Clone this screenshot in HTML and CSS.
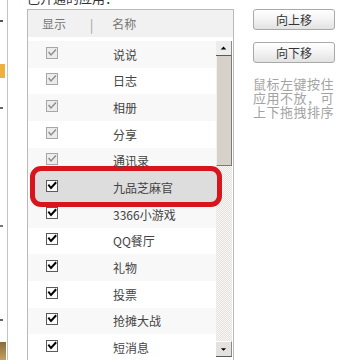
FILE: index.html
```html
<!DOCTYPE html>
<html>
<head>
<meta charset="utf-8">
<link rel="stylesheet" href="styles.css">
</head>
<body>
<div class="strip">
  <span class="mk mk1"></span>
  <span class="mk mk2"></span>
  <span class="mk mk3"></span>
  <span class="mk mk4"></span>
  <span class="mk mk5"></span>
  <span class="mk mk6"></span>
</div>
<div class="main">
  <div class="col-left">
    <div class="title"><span>已开通的应用：</span></div>
    <div class="box">
      <div class="head">
        <span class="h-show">显示</span>
        <span class="h-sep">|</span>
        <span class="h-name">名称</span>
      </div>
      <div class="body">
        <div class="list">
          <div class="row"><svg class="cb dis" viewBox="0 0 12 12"><rect x="0.5" y="0.5" width="11" height="11"/><path d="M3 5.5 L5 8 L9.5 3"/></svg><span class="name">说说</span></div>
          <div class="row"><svg class="cb dis" viewBox="0 0 12 12"><rect x="0.5" y="0.5" width="11" height="11"/><path d="M3 5.5 L5 8 L9.5 3"/></svg><span class="name">日志</span></div>
          <div class="row"><svg class="cb dis" viewBox="0 0 12 12"><rect x="0.5" y="0.5" width="11" height="11"/><path d="M3 5.5 L5 8 L9.5 3"/></svg><span class="name">相册</span></div>
          <div class="row"><svg class="cb dis" viewBox="0 0 12 12"><rect x="0.5" y="0.5" width="11" height="11"/><path d="M3 5.5 L5 8 L9.5 3"/></svg><span class="name">分享</span></div>
          <div class="row"><svg class="cb dis" viewBox="0 0 12 12"><rect x="0.5" y="0.5" width="11" height="11"/><path d="M3 5.5 L5 8 L9.5 3"/></svg><span class="name">通讯录</span></div>
          <div class="row sel"><svg class="cb on" viewBox="0 0 12 12"><rect x="0.5" y="0.5" width="11" height="11"/><path d="M3 5.5 L5 8 L9.5 3"/></svg><span class="name">九品芝麻官</span></div>
          <div class="row"><svg class="cb on" viewBox="0 0 12 12"><rect x="0.5" y="0.5" width="11" height="11"/><path d="M3 5.5 L5 8 L9.5 3"/></svg><span class="name">3366小游戏</span></div>
          <div class="row"><svg class="cb on" viewBox="0 0 12 12"><rect x="0.5" y="0.5" width="11" height="11"/><path d="M3 5.5 L5 8 L9.5 3"/></svg><span class="name">QQ餐厅</span></div>
          <div class="row"><svg class="cb on" viewBox="0 0 12 12"><rect x="0.5" y="0.5" width="11" height="11"/><path d="M3 5.5 L5 8 L9.5 3"/></svg><span class="name">礼物</span></div>
          <div class="row"><svg class="cb on" viewBox="0 0 12 12"><rect x="0.5" y="0.5" width="11" height="11"/><path d="M3 5.5 L5 8 L9.5 3"/></svg><span class="name">投票</span></div>
          <div class="row"><svg class="cb on" viewBox="0 0 12 12"><rect x="0.5" y="0.5" width="11" height="11"/><path d="M3 5.5 L5 8 L9.5 3"/></svg><span class="name">抢摊大战</span></div>
          <div class="row"><svg class="cb on" viewBox="0 0 12 12"><rect x="0.5" y="0.5" width="11" height="11"/><path d="M3 5.5 L5 8 L9.5 3"/></svg><span class="name">短消息</span></div>
        </div>
        <div class="scroll">
          <div class="sb-btn"><svg viewBox="0 0 16 15" class="arr"><path d="M5 9 L11 9 L8 6 Z"/></svg></div>
          <div class="sb-thumb"></div>
          <div class="sb-track"></div>
          <div class="sb-btn down"><svg viewBox="0 0 16 16" class="arr"><path d="M5 7 L11 7 L8 10 Z"/></svg></div>
        </div>
      </div>
    </div>
  </div>
  <div class="col-right">
    <button class="btn">向上移</button>
    <button class="btn second">向下移</button>
    <p class="hint">鼠标左键按住<br>应用不放，可<br>上下拖拽排序</p>
  </div>
</div>
</body>
</html>
```

FILE: styles.css
```css
html, body {
  margin: 0;
  padding: 0;
  background: #fff;
}
body {
  width: 360px;
  height: 360px;
  overflow: hidden;
  display: flex;
  font-family: "Noto Sans CJK SC", "Noto Sans", sans-serif;
  font-size: 12px;
  color: #444;
}
.strip {
  width: 7px;
  height: 360px;
  border-right: 1px solid #c4c4c4;
  display: flex;
  flex-direction: column;
  flex: none;
}
.mk { display: block; flex: none; }
.mk1 { width: 3px; height: 2px; background: #555; margin-top: 20px; }
.mk2 { width: 5px; height: 14px; background: #f0b040; margin-top: 42px; }
.mk3 { width: 3px; height: 2px; background: #666; margin-top: 29px; }
.mk4 { width: 3px; height: 2px; background: #777; margin-top: 116px; }
.mk5 { width: 3px; height: 2px; background: #666; margin-top: 92px; }
.mk6 { width: 6px; height: 20px; background: linear-gradient(#8a6a3a, #c9a864); margin-top: 21px; }

.main {
  display: flex;
  padding-left: 19px;
  flex: none;
}
.col-left {
  width: 207px;
  flex: none;
}
.title {
  height: 9px;
  overflow: hidden;
}
.title span {
  display: block;
  font-size: 13px;
  line-height: 13px;
  margin-top: -9px;
  color: #333;
}
.box {
  border: 1px solid #b9b9b9;
  border-bottom: none;
  height: 360px;
}
.head {
  height: 27px;
  background: #f1f1f1;
  display: flex;
  align-items: center;
  color: #777;
  font-size: 12px;
}
.h-show { margin-left: 14px; }
.h-sep { margin-left: 24px; color: #999; font-size: 12px; transform: scaleY(1.1); }
.h-name { margin-left: 19px; }

.body {
  display: flex;
  padding-top: 4px;
  position: relative;
}
.list {
  width: 188px;
  flex: none;
}
.row {
  height: 26.67px;
  display: flex;
  align-items: center;
  position: relative;
}
.row:nth-child(odd) { background: #f8f8f8; }
.cb {
  width: 12px;
  height: 12px;
  margin-left: 18px;
  margin-top: -3px;
  flex: none;
  position: relative;
  z-index: 2;
}
.cb rect { stroke-width: 1; }
.cb path { fill: none; stroke-linecap: square; }
.cb.dis rect { fill: #ececec; stroke: #a6a6a6; }
.cb.dis path { stroke: #8c8c8c; stroke-width: 1.4; }
.cb.on rect { fill: #fbfbfb; stroke: #5a5a5a; }
.cb.on path { stroke: #000; stroke-width: 2; }
.name {
  margin-left: 55px;
  color: #444;
  position: relative;
  z-index: 2;
  white-space: nowrap;
}
.row.sel { background: transparent; }
.row.sel::before {
  content: "";
  position: absolute;
  left: 2px;
  right: -6px;
  top: -8px;
  bottom: -6px;
  border: 5px solid #d8141c;
  border-radius: 11px;
  background: #dddddd;
  z-index: 1;
}

.scroll {
  width: 16px;
  flex: none;
  display: flex;
  flex-direction: column;
  border-right: 1px solid #fff;
}
.sb-btn {
  height: 15px;
  background: #ededed;
  border-bottom: 1px solid #5a5a5a;
  border-right: 1px solid #8a8a8a;
  box-sizing: border-box;
  flex: none;
}
.sb-btn.down {
  height: 16px;
  border-top: 1px solid #fff;
  background: #e4e2de;
}
.arr { width: 15px; height: 14px; display: block; }
.arr path { fill: #000; }
.sb-thumb {
  height: 110px;
  background: #d6d2c9;
  border-left: 1px solid #f4f2ee;
  border-right: 1px solid #7a7a7a;
  border-bottom: 1px solid #7a7a7a;
  box-sizing: border-box;
  flex: none;
}
.sb-track {
  height: 175px;
  flex: none;
  background-color: #f2f1ee;
  background-image: repeating-conic-gradient(#e4e2dd 0 25%, #f8f7f5 0 50%);
  background-size: 2px 2px;
}

.col-right {
  margin-left: 19px;
  width: 82px;
  display: flex;
  flex-direction: column;
  flex: none;
}
.btn {
  width: 82px;
  height: 21px;
  margin-top: 9px;
  padding: 0;
  border: 1px solid #a9a9a9;
  border-radius: 3px;
  background: linear-gradient(#ffffff, #f3f3f3 50%, #e2e2e2);
  font-family: "Noto Sans CJK SC", "Noto Sans", sans-serif;
  font-size: 12px;
  color: #333;
  line-height: 19px;
}
.btn.second { margin-top: 12px; }
.hint {
  margin: 14px 0 0 0;
  font-size: 13px;
  line-height: 14px;
  letter-spacing: 0.5px;
  color: #a3a3a3;
  white-space: nowrap;
}
```
